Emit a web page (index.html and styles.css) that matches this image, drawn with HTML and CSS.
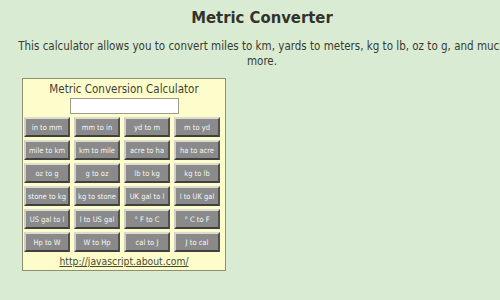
FILE: index.html
```html
<!DOCTYPE html>
<html>
<head>
  <title>Metric Converter</title>
  <link rel="stylesheet" href="styles.css">
</head>
<body>
  <div class="page">
    <h1>Metric Converter</h1>
    <p class="intro">This calculator allows you to convert miles to km, yards to meters, kg to lb, oz to g, and much<br>more.</p>
    <div class="calc">
      <div class="calc-title">Metric Conversion Calculator</div>
      <input type="text" class="calc-input">
      <div class="buttons">
        <button>in to mm</button>
        <button>mm to in</button>
        <button>yd to m</button>
        <button>m to yd</button>
        <button>mile to km</button>
        <button>km to mile</button>
        <button>acre to ha</button>
        <button>ha to acre</button>
        <button>oz to g</button>
        <button>g to oz</button>
        <button>lb to kg</button>
        <button>kg to lb</button>
        <button>stone to kg</button>
        <button>kg to stone</button>
        <button>UK gal to l</button>
        <button>l to UK gal</button>
        <button>US gal to l</button>
        <button>l to US gal</button>
        <button>&deg; F to C</button>
        <button>&deg; C to F</button>
        <button>Hp to W</button>
        <button>W to Hp</button>
        <button>cal to J</button>
        <button>J to cal</button>
      </div>
      <a class="credit" href="#">http://javascript.about.com/</a>
    </div>
  </div>
</body>
</html>
```

FILE: styles.css
```css
body {
  margin: 0;
  background: #d9ecd3;
  font-family: "DejaVu Sans Condensed", "DejaVu Sans", Verdana, sans-serif;
  color: #3a3a30;
  overflow: hidden;
}
.page {
  width: 524px;
}
h1 {
  margin: 0;
  padding-top: 8px;
  text-align: center;
  font-size: 16.5px;
  color: #33332b;
  line-height: 20px;
}
.intro {
  margin: 11px 0 0 0;
  text-align: center;
  font-size: 11.5px;
  line-height: 15px;
  white-space: nowrap;
}
.calc {
  margin: 9px 0 0 22px;
  width: 202px;
  border: 1px solid #8f8f70;
  background: #fdfdcc;
  text-align: center;
}
.calc-title {
  font-size: 11.5px;
  line-height: 16px;
  padding-top: 2px;
  color: #3f3f36;
}
.calc-input {
  display: block;
  margin: 1px auto 0 auto;
  width: 105px;
  height: 12px;
  padding: 1px;
  border: 1px solid #9c9c8c;
  background: #fff;
}
.buttons {
  display: grid;
  grid-template-columns: repeat(4, 46px);
  grid-auto-rows: 20px;
  column-gap: 4px;
  row-gap: 3px;
  padding: 3px 0 0 1px;
}
.buttons button {
  margin: 0;
  padding: 0;
  background: #8a8a8a;
  color: #f6f6f6;
  font-family: "DejaVu Sans Condensed", "DejaVu Sans", sans-serif;
  font-size: 7.5px;
  border: 2px solid;
  border-color: #dcdcd0 #505050 #404040 #cfcfc4;
  white-space: nowrap;
}
.credit {
  display: block;
  font-size: 10.3px;
  line-height: 16px;
  color: #4a4a30;
  padding: 1px 0 1px 0;
}
```
